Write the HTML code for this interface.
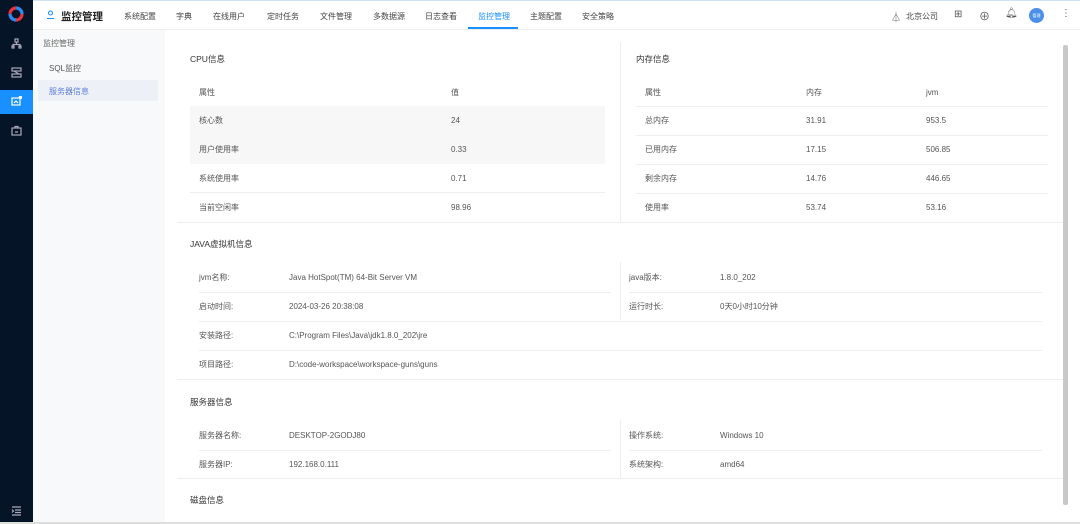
<!DOCTYPE html>
<html><head><meta charset="utf-8"><style>
*{margin:0;padding:0;box-sizing:border-box}
body{width:1080px;height:524px;overflow:hidden;background:#fff;font-family:"Liberation Sans","Noto Sans CJK SC",sans-serif;font-size:8px;color:#555;position:relative}
.a{position:absolute;white-space:nowrap}
.side{left:0;top:0;width:33px;height:524px;background:#061427}
.top{left:33px;top:0;width:1047px;height:30px;background:#fff;border-bottom:1px solid #eee;border-top:1px solid #cfe3f5}
.nav{top:11px;font-size:8px;color:#444}
.menu{left:33px;top:30px;width:132px;height:494px;background:#f8f9fa}
.ttl{font-size:8.5px;color:#333}
.row{height:29px;line-height:29px}
.line{background:#eee;height:1px}
</style></head><body>
<div class="a side"></div>
<svg class="a" style="left:8px;top:6px" width="16" height="16" viewBox="0 0 16 16"><circle cx="8" cy="8" r="6" fill="none" stroke="#e8343f" stroke-width="3.2" stroke-dasharray="9.4 9.4"/><circle cx="8" cy="8" r="6" fill="none" stroke="#2d8cf0" stroke-width="3.2" stroke-dasharray="9.4 9.4" stroke-dashoffset="9.4"/></svg>
<svg class="a" style="left:11px;top:38px" width="11" height="11" viewBox="0 0 11 11" fill="none" stroke="#aab" stroke-width="1.2"><rect x="4" y="1" width="3" height="3"/><path d="M5.5 4v2M2 9V6.5h7V9"/><rect x="1" y="8" width="2" height="2"/><rect x="8" y="8" width="2" height="2"/></svg>
<svg class="a" style="left:11px;top:67px" width="11" height="11" viewBox="0 0 11 11" fill="none" stroke="#aab" stroke-width="1.2"><rect x="1" y="1" width="9" height="3"/><rect x="1" y="7" width="9" height="3"/><path d="M3 4l5 3"/></svg>
<div class="a" style="left:0;top:90px;width:33px;height:24px;background:#1890ff"></div>
<svg class="a" style="left:11px;top:96px" width="11" height="11" viewBox="0 0 11 11" fill="none" stroke="#fff" stroke-width="1.2"><rect x="1" y="2" width="8" height="7"/><path d="M3 7l2-2 2 2"/><circle cx="9.5" cy="1.5" r="1.2" fill="#fff"/></svg>
<svg class="a" style="left:11px;top:125px" width="11" height="11" viewBox="0 0 11 11" fill="none" stroke="#aab" stroke-width="1.2"><rect x="1" y="3" width="9" height="7"/><path d="M4 3V1.5h3V3M4 7h3"/></svg>
<svg class="a" style="left:11px;top:506px" width="11" height="10" viewBox="0 0 11 10" fill="none" stroke="#aab" stroke-width="1.2"><path d="M1 1h9M4 4h6M4 6.5h6M1 9h9M1 3.5l1.5 1.5L1 6.5"/></svg>
<div class="a top"></div>
<svg class="a" style="left:46px;top:10px" width="9" height="9" viewBox="0 0 9 9" fill="none" stroke="#1890ff" stroke-width="1.1"><circle cx="4.5" cy="3" r="2"/><path d="M1 8.5h7"/></svg>
<div class="a" style="left:61px;top:9px;font-size:10.5px;font-weight:bold;color:#222">监控管理</div>
<div class="a nav" style="left:124px">系统配置</div>
<div class="a nav" style="left:176px">字典</div>
<div class="a nav" style="left:213px">在线用户</div>
<div class="a nav" style="left:267px">定时任务</div>
<div class="a nav" style="left:320px">文件管理</div>
<div class="a nav" style="left:373px">多数据源</div>
<div class="a nav" style="left:425px">日志查看</div>
<div class="a nav" style="left:478px;color:#1890ff">监控管理</div>
<div class="a" style="left:468px;top:27px;width:50px;height:2px;background:#1890ff"></div>
<div class="a nav" style="left:530px">主题配置</div>
<div class="a nav" style="left:582px">安全策略</div>
<div class="a" style="left:891px;top:9px;font-size:10px;color:#555">⏃</div>
<div class="a nav" style="left:906px">北京公司</div>
<div class="a" style="left:954px;top:9px;font-size:10px;color:#555">⊞</div>
<div class="a" style="left:979px;top:8px;font-size:11px;color:#555">⊕</div>
<div class="a" style="left:1005px;top:8px;font-size:10px;color:#555">🔔︎</div>
<div class="a" style="left:1029px;top:8px;width:15px;height:15px;border-radius:50%;background:#4a90e8;color:#fff;font-size:4px;line-height:15px;text-align:center">管理</div>
<div class="a" style="left:1061px;top:8px;font-size:10px;color:#555">⋮</div>
<div class="a menu"></div>
<div class="a" style="left:43px;top:38px;color:#666">监控管理</div>
<div class="a" style="left:49px;top:63px;color:#555">SQL监控</div>
<div class="a" style="left:38px;top:80px;width:120px;height:21px;background:#eef0f8"></div>
<div class="a" style="left:49px;top:86px;color:#5a7fd6">服务器信息</div>
<!-- CPU -->
<div class="a" style="left:620px;top:42px;width:1px;height:180px;background:#eee"></div>
<div class="a ttl" style="left:190px;top:53px">CPU信息</div>
<div class="a" style="left:190px;top:106px;width:415px;height:58px;background:#f7f7f7"></div>
<div class="a row" style="left:199px;top:78px">属性</div><div class="a row" style="left:451px;top:78px">值</div>
<div class="a row" style="left:199px;top:106px">核心数</div><div class="a row" style="left:451px;top:106px">24</div>
<div class="a row" style="left:199px;top:135px">用户使用率</div><div class="a row" style="left:451px;top:135px">0.33</div>
<div class="a row" style="left:199px;top:164px">系统使用率</div><div class="a row" style="left:451px;top:164px">0.71</div>
<div class="a row" style="left:199px;top:193px">当前空闲率</div><div class="a row" style="left:451px;top:193px">98.96</div>
<div class="a line" style="left:190px;top:192px;width:415px"></div>
<!-- Mem -->
<div class="a ttl" style="left:636px;top:53px">内存信息</div>
<div class="a row" style="left:645px;top:78px">属性</div><div class="a row" style="left:806px;top:78px">内存</div><div class="a row" style="left:926px;top:78px">jvm</div>
<div class="a line" style="left:636px;top:106px;width:412px"></div>
<div class="a row" style="left:645px;top:106px">总内存</div><div class="a row" style="left:806px;top:106px">31.91</div><div class="a row" style="left:926px;top:106px">953.5</div>
<div class="a line" style="left:636px;top:135px;width:412px"></div>
<div class="a row" style="left:645px;top:135px">已用内存</div><div class="a row" style="left:806px;top:135px">17.15</div><div class="a row" style="left:926px;top:135px">506.85</div>
<div class="a line" style="left:636px;top:164px;width:412px"></div>
<div class="a row" style="left:645px;top:164px">剩余内存</div><div class="a row" style="left:806px;top:164px">14.76</div><div class="a row" style="left:926px;top:164px">446.65</div>
<div class="a line" style="left:636px;top:193px;width:412px"></div>
<div class="a row" style="left:645px;top:193px">使用率</div><div class="a row" style="left:806px;top:193px">53.74</div><div class="a row" style="left:926px;top:193px">53.16</div>
<div class="a line" style="left:177px;top:222px;width:886px"></div>
<!-- JVM -->
<div class="a ttl" style="left:190px;top:238px">JAVA虚拟机信息</div>
<div class="a" style="left:620px;top:262px;width:1px;height:58px;background:#eee"></div>
<div class="a row" style="left:199px;top:263px">jvm名称:</div><div class="a row" style="left:289px;top:263px">Java HotSpot(TM) 64-Bit Server VM</div>
<div class="a row" style="left:629px;top:263px">java版本:</div><div class="a row" style="left:720px;top:263px">1.8.0_202</div>
<div class="a line" style="left:199px;top:292px;width:412px"></div><div class="a line" style="left:629px;top:292px;width:413px"></div>
<div class="a row" style="left:199px;top:292px">启动时间:</div><div class="a row" style="left:289px;top:292px">2024-03-26 20:38:08</div>
<div class="a row" style="left:629px;top:292px">运行时长:</div><div class="a row" style="left:720px;top:292px">0天0小时10分钟</div>
<div class="a line" style="left:199px;top:321px;width:843px"></div>
<div class="a row" style="left:199px;top:321px">安装路径:</div><div class="a row" style="left:289px;top:321px">C:\Program Files\Java\jdk1.8.0_202\jre</div>
<div class="a line" style="left:199px;top:350px;width:843px"></div>
<div class="a row" style="left:199px;top:350px">项目路径:</div><div class="a row" style="left:289px;top:350px">D:\code-workspace\workspace-guns\guns</div>
<div class="a line" style="left:177px;top:379px;width:886px"></div>
<!-- Server -->
<div class="a ttl" style="left:190px;top:396px">服务器信息</div>
<div class="a" style="left:620px;top:420px;width:1px;height:58px;background:#eee"></div>
<div class="a row" style="left:199px;top:421px">服务器名称:</div><div class="a row" style="left:289px;top:421px">DESKTOP-2GODJ80</div>
<div class="a row" style="left:629px;top:421px">操作系统:</div><div class="a row" style="left:720px;top:421px">Windows 10</div>
<div class="a line" style="left:199px;top:450px;width:412px"></div><div class="a line" style="left:629px;top:450px;width:413px"></div>
<div class="a row" style="left:199px;top:450px">服务器IP:</div><div class="a row" style="left:289px;top:450px">192.168.0.111</div>
<div class="a row" style="left:629px;top:450px">系统架构:</div><div class="a row" style="left:720px;top:450px">amd64</div>
<div class="a line" style="left:177px;top:478px;width:886px"></div>
<div class="a ttl" style="left:190px;top:494px">磁盘信息</div>
<div class="a" style="left:1063px;top:45px;width:5px;height:460px;background:#c8c8c8;border-radius:2px"></div>
<div class="a" style="left:0;top:522px;width:1080px;height:2px;background:#ddd"></div>
</body></html>
